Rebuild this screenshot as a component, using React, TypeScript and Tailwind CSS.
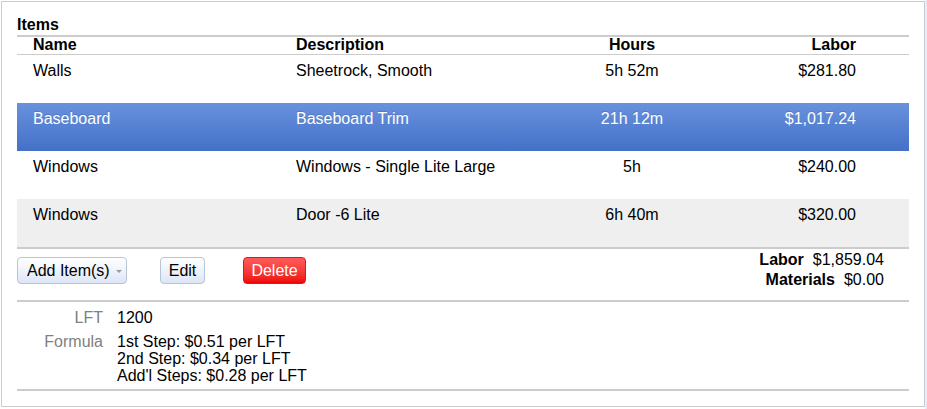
import React from "react";

type Item = {
  name: string;
  description: string;
  hours: string;
  labor: string;
};

const items: Item[] = [
  { name: "Walls", description: "Sheetrock, Smooth", hours: "5h 52m", labor: "$281.80" },
  { name: "Baseboard", description: "Baseboard Trim", hours: "21h 12m", labor: "$1,017.24" },
  { name: "Windows", description: "Windows - Single Lite Large", hours: "5h", labor: "$240.00" },
  { name: "Windows", description: "Door -6 Lite", hours: "6h 40m", labor: "$320.00" },
];

const font = "font-['Liberation_Sans',Arial,sans-serif]";

function Row({ item, index }: { item: Item; index: number }) {
  const selected = index === 1;
  const shaded = index === 3;
  return (
    <div
      className={
        "flex h-[48px] pl-[16px] pr-[53px] pt-[7px] leading-[18px] " +
        (selected
          ? "bg-gradient-to-b from-[#6892dd] to-[#4470c8] text-white [text-shadow:0_-1px_0_rgba(0,0,0,0.15)]"
          : shaded
            ? "bg-[#efefef] text-black"
            : "bg-white text-black")
      }
    >
      <div className="w-[263px]">{item.name}</div>
      <div className="w-[264px]">{item.description}</div>
      <div className="w-[144px] text-center">{item.hours}</div>
      <div className="flex-1 text-right">{item.labor}</div>
    </div>
  );
}

function Button({
  children,
  className,
  danger,
}: {
  children: React.ReactNode;
  className?: string;
  danger?: boolean;
}) {
  return (
    <button
      className={
        "flex h-[27px] items-center justify-center rounded-[4px] border text-[16px] leading-[18px] " +
        (danger
          ? "border-[#d81a1a] bg-gradient-to-b from-[#ff5a5a] to-[#ee0000] text-white"
          : "border-[#b9c3d6] bg-gradient-to-b from-white to-[#dde6f6] text-black") +
        " " +
        (className ?? "")
      }
    >
      {children}
    </button>
  );
}

export default function App() {
  return (
    <div className={`flex h-[409px] w-[927px] bg-white text-[16px] ${font}`}>
      <div className="ml-[1px] mt-[1px] h-[406px] w-[924px] border border-[#cccccc] bg-white pl-[15px] pr-[15px] pt-[14px]">
        <div className="font-bold leading-[18px] text-black">Items</div>
        <div className="mt-[1px] h-[2px] bg-[#cccccc]" />

        {/* table header */}
        <div className="flex h-[17px] pl-[16px] pr-[53px] font-bold leading-[16px] text-black">
          <div className="w-[263px]">Name</div>
          <div className="w-[264px]">Description</div>
          <div className="w-[144px] text-center">Hours</div>
          <div className="flex-1 text-right">Labor</div>
        </div>
        <div className="h-px bg-[#cccccc]" />

        {items.map((item, i) => (
          <Row key={i} item={item} index={i} />
        ))}
        <div className="h-[2px] bg-[#cccccc]" />

        {/* actions + totals */}
        <div className="flex h-[51px] justify-between">
          <div className="mt-[8px] flex items-start">
            <Button className="w-[110px] justify-start pl-[9px]">
              Add Item(s)
              <span className="ml-[6px] mt-[1px] h-0 w-0 border-x-[3px] border-t-[3px] border-x-transparent border-t-[#9a9a9a]" />
            </Button>
            <Button className="ml-[33px] w-[45px]">Edit</Button>
            <Button className="ml-[38px] w-[63px]" danger>
              Delete
            </Button>
          </div>
          <div className="pr-[25px] pt-[1px] leading-[20px] text-black">
            <div className="flex justify-end gap-[9px]">
              <span className="font-bold">Labor</span>
              <span>$1,859.04</span>
            </div>
            <div className="flex justify-end gap-[9px]">
              <span className="font-bold">Materials</span>
              <span>$0.00</span>
            </div>
          </div>
        </div>
        <div className="h-[2px] bg-[#cccccc]" />

        {/* properties */}
        <div className="grid grid-cols-[86px_1fr] gap-x-[14px] gap-y-[7px] pb-[5px] pt-[7px] leading-[17px]">
          <div className="text-right text-[#808080]">LFT</div>
          <div className="text-black">1200</div>
          <div className="text-right text-[#808080]">Formula</div>
          <div className="text-black">
            <div>1st Step: $0.51 per LFT</div>
            <div>2nd Step: $0.34 per LFT</div>
            <div>Add'l Steps: $0.28 per LFT</div>
          </div>
        </div>
        <div className="h-[2px] bg-[#cccccc]" />
      </div>
      <div className="flex-1 bg-[#e8eef8]" />
    </div>
  );
}
